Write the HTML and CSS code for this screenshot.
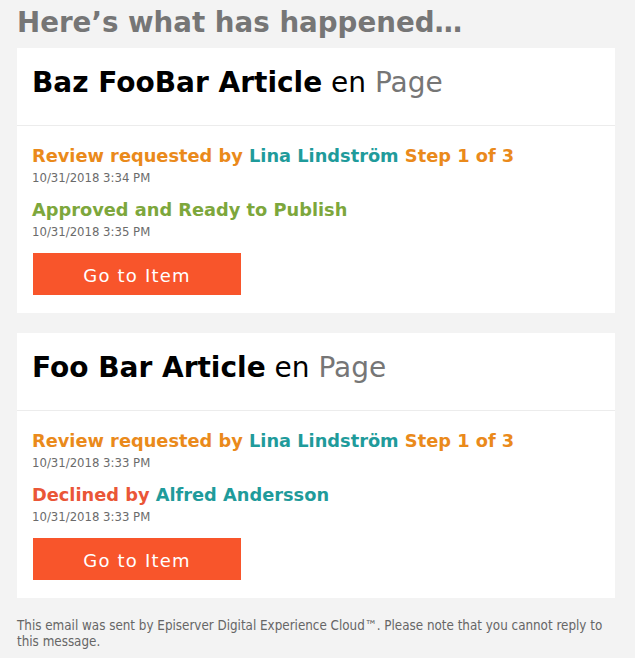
FILE: index.html
```html
<!DOCTYPE html>
<html lang="en">
<head>
  <meta charset="UTF-8" />
  <title>Here’s what has happened</title>
  <meta name="viewport" content="width=device-width, initial-scale=1.0" />
  <link rel="stylesheet" href="styles.css">
</head>
<body>
  <div class="mail">
    <h1 class="intro">Here’s what has happened…</h1>

    <div class="card">
      <div class="card-head">
        <strong>Baz FooBar Article</strong> en <span class="type">Page</span>
      </div>
      <div class="card-body">
        <div class="event">
          <div class="event-title review">Review requested by <span class="user">Lina Lindström</span> Step 1 of 3</div>
          <div class="event-date">10/31/2018 3:34 PM</div>
        </div>
        <div class="event">
          <div class="event-title approved">Approved and Ready to Publish</div>
          <div class="event-date">10/31/2018 3:35 PM</div>
        </div>
        <a class="btn" href="#">Go to Item</a>
      </div>
    </div>

    <div class="card">
      <div class="card-head">
        <strong>Foo Bar Article</strong> en <span class="type">Page</span>
      </div>
      <div class="card-body">
        <div class="event">
          <div class="event-title review">Review requested by <span class="user">Lina Lindström</span> Step 1 of 3</div>
          <div class="event-date">10/31/2018 3:33 PM</div>
        </div>
        <div class="event">
          <div class="event-title declined">Declined by <span class="user">Alfred Andersson</span></div>
          <div class="event-date">10/31/2018 3:33 PM</div>
        </div>
        <a class="btn" href="#">Go to Item</a>
      </div>
    </div>

    <p class="footer">This email was sent by Episerver Digital Experience Cloud™. Please note that you cannot reply to this message.</p>
  </div>
</body>
</html>
```

FILE: styles.css
```css
* { margin: 0; padding: 0; box-sizing: border-box; }

body {
  background: #f3f3f3;
  font-family: "DejaVu Sans Condensed", "DejaVu Sans", sans-serif;
  color: #333;
}

.mail {
  width: 598px;
  margin-left: 17px;
  padding-top: 7px;
}

.intro {
  font-family: "DejaVu Sans", sans-serif;
  font-size: 27.7px;
  line-height: 32px;
  font-weight: bold;
  color: #767676;
  margin-bottom: 9px;
}

.card {
  background: #fff;
  margin-bottom: 20px;
}

.card-head {
  font-family: "DejaVu Sans", sans-serif;
  font-size: 28px;
  line-height: 32px;
  color: #000;
  padding: 19px 15px 26px;
  border-bottom: 1px solid #ececec;
}

.card-head .type {
  color: #767676;
}

.card-body {
  padding: 20px 15px 18px;
}

.event + .event {
  margin-top: 14px;
}

.event-title {
  font-family: "DejaVu Sans", sans-serif;
  font-size: 17.8px;
  line-height: 20px;
  font-weight: bold;
}

.event-title .user {
  color: #1f9b9b;
}

.review { color: #ea8a1b; }
.approved { color: #7da73c; }
.declined { color: #ea5637; }

.event-date {
  margin-top: 4px;
  font-size: 13px;
  line-height: 16px;
  color: #6b6b6b;
}

.btn {
  display: block;
  width: 208px;
  height: 42px;
  margin: 13px 0 0 1px;
  padding-top: 3px;
  background: #f8552b;
  color: #fff;
  text-decoration: none;
  text-align: center;
  font-family: "DejaVu Sans", sans-serif;
  font-size: 18px;
  line-height: 39px;
  letter-spacing: 1.2px;
}

.footer {
  font-size: 13.3px;
  line-height: 16px;
  color: #666;
}
```
